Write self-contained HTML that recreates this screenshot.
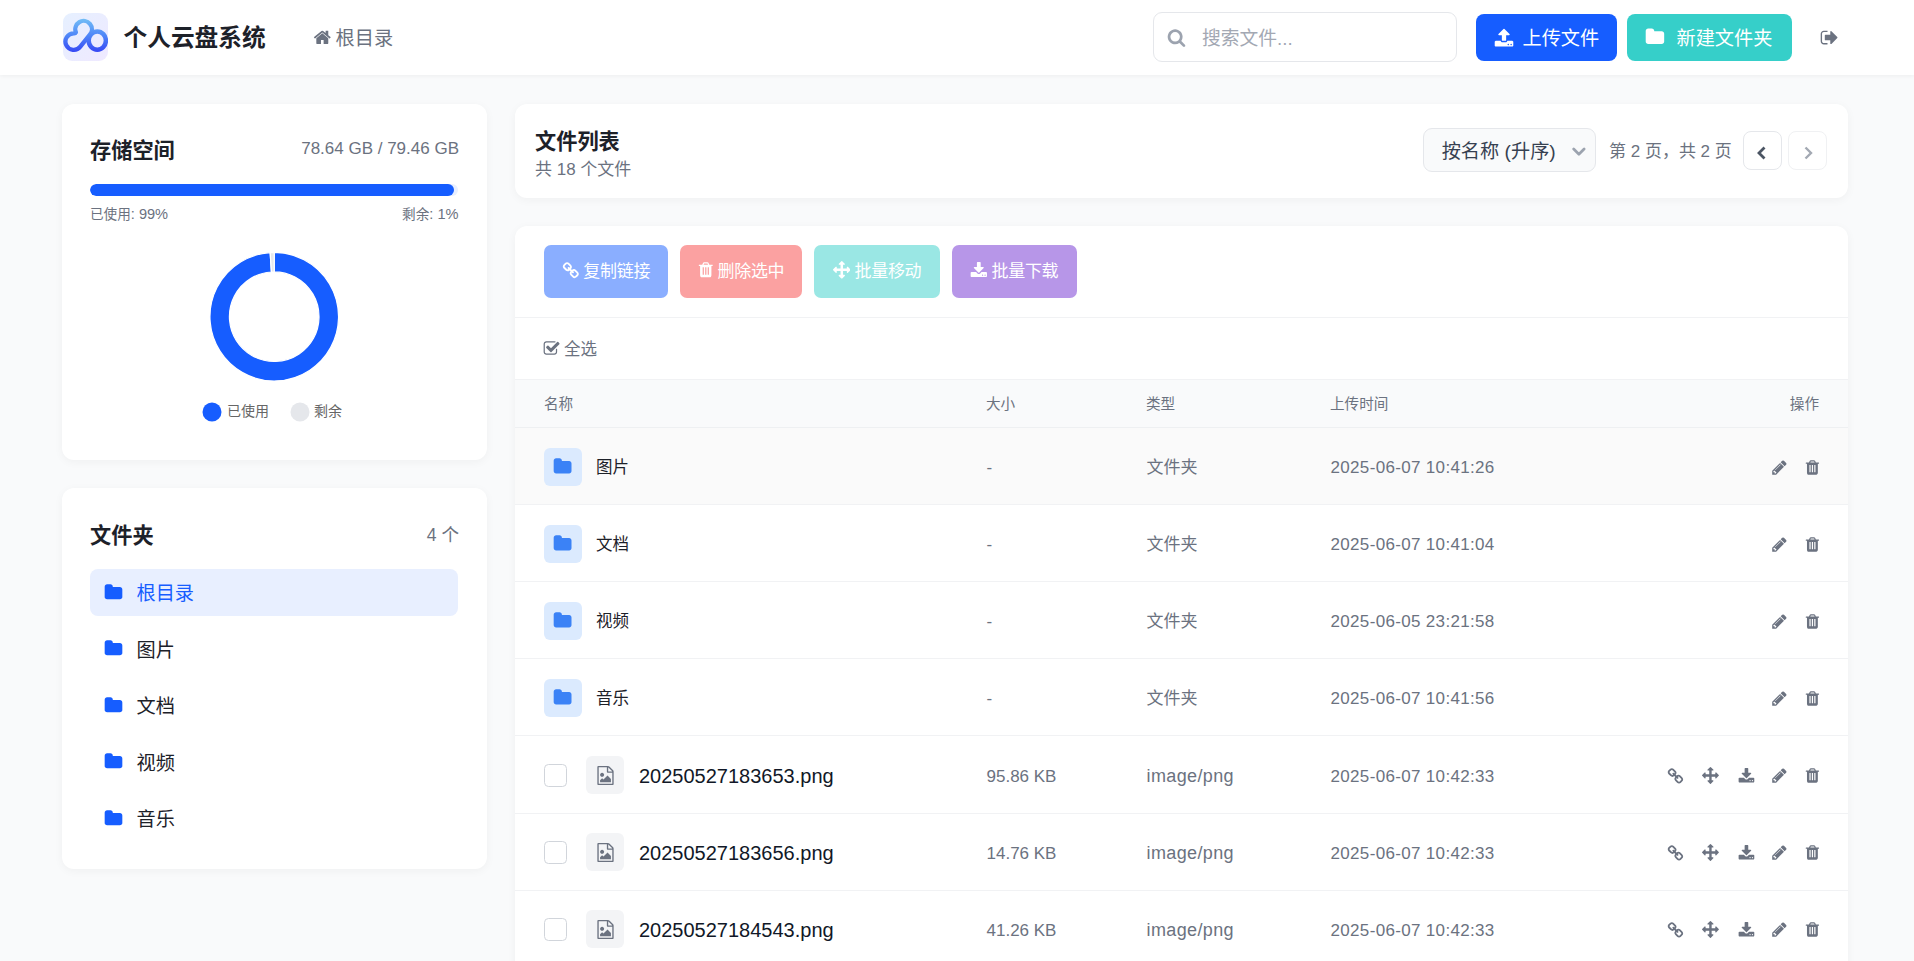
<!DOCTYPE html>
<html lang="zh-CN">
<head>
<meta charset="utf-8">
<title>个人云盘系统</title>
<style>
*{box-sizing:border-box;margin:0;padding:0}
html,body{width:1914px;height:961px;overflow:hidden}
body{font-family:"Liberation Sans","Noto Sans CJK SC",sans-serif;background:#f9fafb;color:#1d2129;position:relative}
svg{display:block}
span{white-space:nowrap}
#hdr{position:absolute;left:0;top:0;width:1914px;height:75px;background:#fff;box-shadow:0 1px 4px rgba(0,0,0,.05)}
#logo{position:absolute;left:62.600px;top:13px;width:45.800px;height:48.400px;border-radius:9px;background:linear-gradient(135deg,#e6f0ff,#efe9ff)}
#title{position:absolute;left:123.5px;top:20.3px;font-size:23.7px;line-height:36px;font-weight:700;color:#1d2129;white-space:nowrap}
#crumb{position:absolute;left:313px;top:22px;height:30px;color:#6b7280;font-size:19.2px;line-height:30px}
#crumb span{position:absolute;left:22.6px;top:2px}
#search{position:absolute;left:1153px;top:12px;width:304px;height:50px;border:1px solid #e5e7eb;border-radius:9px;background:#fff}
#search span{position:absolute;left:48px;top:10.8px;font-size:18.8px;line-height:30px;color:#a3a8b3}
.hbtn{position:absolute;top:14px;height:46.500px;border-radius:8px;color:#fff;font-size:19.2px;line-height:30px}
.hbtn span{position:absolute;top:9.7px}
#bup{left:1476px;width:141px;background:#165dff}
#bnew{left:1627px;width:165px;background:#36cfc9}
.card{position:absolute;background:#fff;border-radius:12px;box-shadow:0 2px 10px rgba(0,0,0,.045)}
#c1{left:62px;top:104px;width:425px;height:356px}
#c2{left:62px;top:488px;width:425px;height:381px}
#c3{left:515px;top:104px;width:1333px;height:93.5px}
#c4{left:515px;top:226px;width:1333px;height:760px;overflow:hidden}
.ct{position:absolute;font-weight:700;font-size:21.2px;line-height:30px;color:#1d2129;white-space:nowrap}
.rt{position:absolute;color:#6b7280;line-height:24px;white-space:nowrap}
.sub{color:#6b7280}
#track{position:absolute;left:28px;top:80px;width:368px;height:12px;border-radius:6px;background:#e8efff;overflow:hidden}
#fill{width:364.300px;height:12px;border-radius:6px;background:#165dff}
.sm i{font-style:normal;font-size:14.6px}
.sm{position:absolute;font-size:13.6px;line-height:20px;color:#6b7280;white-space:nowrap}
.lg{position:absolute;font-size:14px;line-height:20.6px;color:#666;white-space:nowrap}
.fi{position:absolute;left:28px;width:368px;height:47px;border-radius:8px;font-size:19.2px;line-height:47px;color:#1d2129}
.fi span{position:absolute;left:46.500px;top:1px}
.fi.act{background:#e8efff;color:#165dff}
#sel{position:absolute;left:907.500px;top:24px;width:173px;height:44px;border:1px solid #e5e7eb;border-radius:9px;background:#f9fafb;font-size:19.2px;line-height:42px;color:#374151}
#sel span{position:absolute;left:18.2px;top:2.3px}
.pg{position:absolute;top:27px;width:39.5px;height:38.500px;border:1px solid #e5e7eb;border-radius:8px;background:#fff;display:flex;align-items:center;justify-content:center}
.pg.dis{border-color:#f0f1f3}
.bb{position:absolute;top:19px;height:53px;border-radius:7px;color:#fff;font-size:17px;line-height:53px}
.bb span{position:absolute;left:38.500px;top:0;letter-spacing:-.3px}
.hl{position:absolute;left:0;width:1333px;height:1px;background:#f1f2f4}
#selall{font-size:16.500px;color:#6b7280}
#selall span{position:absolute;left:49px;top:111px;line-height:24px}
#th{position:absolute;left:0;top:153px;width:1333px;height:49px;background:#f9fafb;border-top:1px solid #f1f2f4;border-bottom:1px solid #eef0f2;font-size:14.6px;color:#6b7280}
#th span{position:absolute;top:0;line-height:48px}
.row{position:absolute;left:0;width:1333px;height:77.05px;border-bottom:1px solid #f1f2f4}
.row.hov{background:#fafafa}
.ib{position:absolute;top:19.500px;width:38px;height:38px;border-radius:6px}
.ib.d{background:#dbeafe}
.ib.f{background:#f3f4f6}
.cb{position:absolute;left:29px;top:27px;width:23px;height:23.500px;border:1px solid #d1d5db;border-radius:4.500px;background:#fff}
.nm{position:absolute;top:0;line-height:79px;color:#1d2129}
.dn{font-size:16.500px}
.fn{font-size:20px;color:#111827}
.c{position:absolute;top:0;line-height:79px;color:#6b7280;font-size:17px}
.sz{left:471.500px}
.tp{left:631.500px}
.dt{left:815.500px;letter-spacing:.33px}
.tpf{font-size:18px;letter-spacing:.38px}
</style>
</head>
<body>
<div id="hdr">
<div id="logo"><svg width="45.800" height="48.400" viewBox="0 0 45.800 48.400"><defs><linearGradient id="lg" gradientUnits="userSpaceOnUse" x1="0" y1="6" x2="0" y2="39"><stop offset="0" stop-color="#72bdf6"/><stop offset=".5" stop-color="#4f86f8"/><stop offset="1" stop-color="#3648f4"/></linearGradient></defs>
<path d="M12.900 19.300A8.300 8.300 0 1 1 26.900 21.600L17.300 33.700A8.300 8.300 0 1 1 10.900 20.300Q12.400 20.400 12.900 19.300Z" fill="none" stroke="url(#lg)" stroke-width="4.300" stroke-linejoin="round"/>
<ellipse cx="34.300" cy="27.600" rx="8.600" ry="9.100" fill="none" stroke="url(#lg)" stroke-width="4.500"/></svg></div>
<div id="title">个人云盘系统</div>
<div id="crumb"><svg width="18.6" height="18.6" viewBox="0 0 1792 1792" style="position:absolute;left:-0.2px;top:5.65px;"><path fill="#6b7280" d="M1472 992v480q0 26-19 45t-45 19h-384v-384h-256v384h-384q-26 0-45-19t-19-45v-480q0-1 .5-3t.5-3l575-474 575 474q1 2 1 6zm223-69l-62 74q-8 9-21 11h-3q-13 0-21-7l-692-577-692 577q-12 8-24 7-13-2-21-11l-62-74q-8-10-7-23.500t11-21.500l719-599q32-26 76-26t76 26l244 204v-195q0-14 9-23t23-9h192q14 0 23 9t9 23v408l219 182q10 8 11 21.500t-7 23.500z"/></svg><span>根目录</span></div>
<div id="search"><svg width="19" height="19" viewBox="0 0 1792 1792" style="position:absolute;left:12.9px;top:14.72px;"><path fill="#9ca3af" d="M1216 832q0-185-131.500-316.500t-316.500-131.500-316.500 131.500-131.500 316.500 131.500 316.500 316.500 131.500 316.500-131.500 131.500-316.500zm512 832q0 52-38 90t-90 38q-54 0-90-38l-343-342q-179 124-399 124-143 0-273.500-55.500t-225-150-150-225-55.500-273.500 55.500-273.500 150-225 225-150 273.500-55.500 273.500 55.500 225 150 150 225 55.500 273.500q0 220-124 399l343 343q37 37 37 90z"/></svg><span>搜索文件...</span></div>
<div class="hbtn" id="bup"><svg width="20" height="20" viewBox="0 0 1792 1792" style="position:absolute;left:18.2px;top:13.56px;"><path fill="#fff" d="M1344 1472q0-26-19-45t-45-19-45 19-19 45 19 45 45 19 45-19 19-45zm256 0q0-26-19-45t-45-19-45 19-19 45 19 45 45 19 45-19 19-45zm128-224v320q0 40-28 68t-68 28h-1472q-40 0-68-28t-28-68v-320q0-40 28-68t68-28h427q21 56 70.500 92t110.500 36h256q61 0 110.500-36t70.500-92h427q40 0 68 28t28 68zm-325-648q-17 40-59 40h-256v448q0 26-19 45t-45 19h-256q-26 0-45-19t-19-45v-448h-256q-42 0-59-40-17-39 14-69l448-448q18-19 45-19t45 19l448 448q31 30 14 69z"/></svg><span style="left:46.5px">上传文件</span></div>
<div class="hbtn" id="bnew"><svg width="19.9" height="19.9" viewBox="0 0 1792 1792" style="position:absolute;left:17.75px;top:13.26px;"><path fill="#fff" d="M1728 608v704q0 92-66 158t-158 66h-1216q-92 0-158-66t-66-158v-960q0-92 66-158t158-66h320q92 0 158 66t66 158v32h672q92 0 158 66t66 158z"/></svg><span style="left:49.5px">新建文件夹</span></div>
<svg width="19.2" height="19.2" viewBox="0 0 1792 1792" style="position:absolute;left:1819.56px;top:27.7px;"><path fill="#6b7280" d="M704 1440q0 4 1 20t.5 26.500-3 23.500-10 19.500-20.500 6.500h-320q-119 0-203.500-84.500t-84.500-203.500v-704q0-119 84.500-203.500t203.500-84.500h320q13 0 22.500 9.500t9.500 22.500q0 4 1 20t.5 26.500-3 23.500-10 19.500-20.500 6.500h-320q-66 0-113 47t-47 113v704q0 66 47 113t113 47h312l11.500 1 11.500 3 8 5.500 7 9 2 13.500zm928-544q0 26-19 45l-544 544q-19 19-45 19t-45-19-19-45v-288h-448q-26 0-45-19t-19-45v-384q0-26 19-45t45-19h448v-288q0-26 19-45t45-19 45 19l544 544q19 19 19 45z"/></svg>
</div>
<div class="card" id="c1">
<div class="ct" style="left:28px;top:32px">存储空间</div>
<div class="rt" style="right:28px;top:33px;font-size:17px">78.64 GB / 79.46 GB</div>
<div id="track"><div id="fill"></div></div>
<div class="sm" style="left:28px;top:100.2px">已使用<i>: 99%</i></div>
<div class="sm" style="right:28.5px;top:100.2px">剩余<i>: 1%</i></div>
<svg width="425" height="356" style="position:absolute;left:0;top:0"><path d="M212.20 148.40A64.3 64.3 0 1 1 208.16 148.53L209.39 167.99A44.8 44.8 0 1 0 212.20 167.90Z" fill="#165dff" stroke="#fff" stroke-width="1.2" stroke-linejoin="round"/><path d="M208.16 148.53A64.3 64.3 0 0 1 212.20 148.40L212.20 167.90A44.8 44.8 0 0 0 209.39 167.99Z" fill="#e5e7eb" stroke="#fff" stroke-width="1.2" stroke-linejoin="round"/><circle cx="150" cy="308" r="9.5" fill="#165dff"/><circle cx="238" cy="308" r="9.5" fill="#e5e7eb"/></svg>
<div class="lg" style="left:165px;top:297px">已使用</div><div class="lg" style="left:252px;top:297px">剩余</div>
</div>
<div class="card" id="c2">
<div class="ct" style="left:28px;top:33px">文件夹</div>
<div class="rt" style="right:28px;top:34.6px;font-size:17.6px">4 个</div>
<div class="fi act" style="top:81.0px"><svg width="19" height="19" viewBox="0 0 1792 1792" style="position:absolute;left:14.0px;top:13.68px;"><path fill="#165dff" d="M1728 608v704q0 92-66 158t-158 66h-1216q-92 0-158-66t-66-158v-960q0-92 66-158t158-66h320q92 0 158 66t66 158v32h672q92 0 158 66t66 158z"/></svg><span>根目录</span></div>
<div class="fi" style="top:137.5px"><svg width="19" height="19" viewBox="0 0 1792 1792" style="position:absolute;left:14.0px;top:13.68px;"><path fill="#165dff" d="M1728 608v704q0 92-66 158t-158 66h-1216q-92 0-158-66t-66-158v-960q0-92 66-158t158-66h320q92 0 158 66t66 158v32h672q92 0 158 66t66 158z"/></svg><span>图片</span></div>
<div class="fi" style="top:194.0px"><svg width="19" height="19" viewBox="0 0 1792 1792" style="position:absolute;left:14.0px;top:13.68px;"><path fill="#165dff" d="M1728 608v704q0 92-66 158t-158 66h-1216q-92 0-158-66t-66-158v-960q0-92 66-158t158-66h320q92 0 158 66t66 158v32h672q92 0 158 66t66 158z"/></svg><span>文档</span></div>
<div class="fi" style="top:250.5px"><svg width="19" height="19" viewBox="0 0 1792 1792" style="position:absolute;left:14.0px;top:13.68px;"><path fill="#165dff" d="M1728 608v704q0 92-66 158t-158 66h-1216q-92 0-158-66t-66-158v-960q0-92 66-158t158-66h320q92 0 158 66t66 158v32h672q92 0 158 66t66 158z"/></svg><span>视频</span></div>
<div class="fi" style="top:307.0px"><svg width="19" height="19" viewBox="0 0 1792 1792" style="position:absolute;left:14.0px;top:13.68px;"><path fill="#165dff" d="M1728 608v704q0 92-66 158t-158 66h-1216q-92 0-158-66t-66-158v-960q0-92 66-158t158-66h320q92 0 158 66t66 158v32h672q92 0 158 66t66 158z"/></svg><span>音乐</span></div>
</div>
<div class="card" id="c3">
<div class="ct" style="left:20px;top:23px">文件列表</div>
<div class="sub" style="position:absolute;left:20px;top:53.5px;font-size:17px;line-height:24px">共 18 个文件</div>
<div id="sel"><span>按名称 (升序)</span><svg width="14" height="10" viewBox="0 0 14 10" style="position:absolute;left:148.4px;top:17.6px"><path d="M1.7 2 6.9 7.2 12.1 2" fill="none" stroke="#9ca3af" stroke-width="2.7" stroke-linecap="round" stroke-linejoin="round"/></svg></div>
<div class="sub" style="position:absolute;left:1094px;top:36.3px;font-size:17px;line-height:24px;white-space:nowrap">第 2 页，共 2 页</div>
<div class="pg" style="left:1227.6px"><svg width="12" height="16" viewBox="0 0 12 16" style="position:relative;top:2.4px;left:-.8px"><path d="M8.5 2.5 3 8l5.500 5.500" fill="none" stroke="#4b5563" stroke-width="2.8" stroke-linejoin="miter"/></svg></div>
<div class="pg dis" style="left:1272.6px"><svg width="12" height="16" viewBox="0 0 12 16" style="position:relative;top:2.4px;left:.3px"><path d="M3.5 2.5 9 8l-5.500 5.500" fill="none" stroke="#a3a9b3" stroke-width="2.4" stroke-linejoin="miter"/></svg></div>
</div>
<div class="card" id="c4">
<div class="bb" style="left:29px;width:124px;background:#8aaeff"><svg width="17.6" height="17.6" viewBox="0 0 1792 1792" style="position:absolute;left:18.2px;top:16.83px;"><path fill="#fff" d="M1520 1216q0-40-28-68l-208-208q-28-28-68-28-42 0-72 32 3 3 19 18.500t21.500 21.500 15 19 13 25.500 3.500 27.500q0 40-28 68t-68 28q-15 0-27.500-3.500t-25.500-13-19-15-21.500-21.500-18.500-19q-33 31-33 73 0 40 28 68l206 207q27 27 68 27 40 0 68-26l147-146q28-28 28-67zm-703-705q0-40-28-68l-206-207q-28-28-68-28-39 0-68 27l-147 146q-28 28-28 67 0 40 28 68l208 208q27 27 68 27 42 0 72-31-3-3-19-18.500t-21.500-21.500-15-19-13-25.500-3.500-27.500q0-40 28-68t68-28q15 0 27.500 3.500t25.500 13 19 15 21.500 21.500 18.500 19q33-31 33-73zm895 705q0 120-85 203l-147 146q-83 83-203 83-121 0-204-85l-206-207q-83-83-83-203 0-123 88-209l-88-88q-86 88-208 88-120 0-204-84l-208-208q-84-84-84-204t85-203l147-146q83-83 203-83 121 0 204 85l206 207q83 83 83 203 0 123-88 209l88 88q86-88 208-88 120 0 204 84l208 208q84 84 84 204z"/></svg><span style="left:39.3px">复制链接</span></div>
<div class="bb" style="left:165px;width:122px;background:#fba1a1"><svg width="17.6" height="17.6" viewBox="0 0 1792 1792" style="position:absolute;left:16.74px;top:16.2px;"><path fill="#fff" fill-rule="evenodd" d="M224 384h307l70-167q15-37 54-63t79-26h320q40 0 79 26t54 63l70 167h307q14 0 23 9t9 23v64q0 14-9 23t-23 9h-96v948q0 83-47 143.500t-113 60.500h-832q-66 0-113-58.500t-47-141.500v-952h-96q-14 0-23-9t-9-23v-64q0-14 9-23t23-9zM672 384h448l-48-117q-7-9-17-11h-317q-10 2-17 11zM576 672q0-14 9-23t23-9h64q14 0 23 9t9 23v704q0 14-9 23t-23 9h-64q-14 0-23-9t-9-23zM832 672q0-14 9-23t23-9h64q14 0 23 9t9 23v704q0 14-9 23t-23 9h-64q-14 0-23-9t-9-23zM1088 672q0-14 9-23t23-9h64q14 0 23 9t9 23v704q0 14-9 23t-23 9h-64q-14 0-23-9t-9-23z"/></svg><span style="left:37.5px">删除选中</span></div>
<div class="bb" style="left:299px;width:126px;background:#9ae7e4"><svg width="17.6" height="17.6" viewBox="0 0 1792 1792" style="position:absolute;left:18.7px;top:16.2px;"><path fill="#fff" d="M1792 896q0 26-19 45l-256 256q-19 19-45 19t-45-19-19-45v-128h-384v384h128q26 0 45 19t19 45-19 45l-256 256q-19 19-45 19t-45-19l-256-256q-19-19-19-45t19-45 45-19h128v-384h-384v128q0 26-19 45t-45 19-45-19l-256-256q-19-19-19-45t19-45l256-256q19-19 45-19t45 19 19 45v128h384v-384h-128q-26 0-45-19t-19-45 19-45l256-256q19-19 45-19t45 19l256 256q19 19 19 45t-19 45-45 19h-128v384h384v-128q0-26 19-45t45-19 45 19l256 256q19 19 19 45z"/></svg><span style="left:40.5px">批量移动</span></div>
<div class="bb" style="left:437px;width:125px;background:#b796e8"><svg width="17.6" height="17.6" viewBox="0 0 1792 1792" style="position:absolute;left:17.7px;top:17.46px;"><path fill="#fff" d="M1344 1344q0-26-19-45t-45-19-45 19-19 45 19 45 45 19 45-19 19-45zm256 0q0-26-19-45t-45-19-45 19-19 45 19 45 45 19 45-19 19-45zm128-224v320q0 40-28 68t-68 28h-1472q-40 0-68-28t-28-68v-320q0-40 28-68t68-28h465l135 136q58 56 136 56t136-56l136-136h464q40 0 68 28t28 68zm-325-569q17 41-14 70l-448 448q-18 19-45 19t-45-19l-448-448q-31-29-14-70 17-39 59-39h256v-448q0-26 19-45t45-19h256q26 0 45 19t19 45v448h256q42 0 59 39z"/></svg><span style="left:39.5px">批量下载</span></div>
<div class="hl" style="top:91px"></div>
<div id="selall"><svg width="17.2" height="17.2" viewBox="0 0 1792 1792" style="position:absolute;left:28.25px;top:114.11px;"><path fill="#6b7280" d="M1472 930v318q0 119-84.500 203.500t-203.500 84.500h-832q-119 0-203.500-84.500t-84.500-203.500v-832q0-119 84.500-203.500t203.500-84.500h832q63 0 117 25 15 7 18 23 3 17-9 29l-49 49q-10 10-23 10-3 0-9-2-23-6-45-6h-832q-66 0-113 47t-47 113v832q0 66 47 113t113 47h832q66 0 113-47t47-113v-254q0-13 9-22l64-64q10-10 23-10 6 0 12 3 20 8 20 29zm231-489l-814 814q-24 24-57 24t-57-24l-430-430q-24-24-24-57t24-57l110-110q24-24 57-24t57 24l263 263 647-647q24-24 57-24t57 24l110 110q24 24 24 57t-24 57z"/></svg><span>全选</span></div>
<div id="th"><span style="left:29px">名称</span><span style="left:471px">大小</span><span style="left:631px">类型</span><span style="left:815px">上传时间</span><span style="right:29px">操作</span></div>
<div class="row hov" style="top:202.30px"><div class="ib d" style="left:29px"><svg width="19.2" height="19.2" viewBox="0 0 1792 1792" style="position:absolute;left:9.4px;top:8.89px;"><path fill="#3b82f6" d="M1728 608v704q0 92-66 158t-158 66h-1216q-92 0-158-66t-66-158v-960q0-92 66-158t158-66h320q92 0 158 66t66 158v32h672q92 0 158 66t66 158z"/></svg></div><span class="nm dn" style="left:81px">图片</span><span class="c sz">-</span><span class="c tp tpd">文件夹</span><span class="c dt">2025-06-07 10:41:26</span><svg width="16.9" height="16.9" viewBox="0 0 1792 1792" style="position:absolute;left:1289.29px;top:30.55px;"><path fill="#6b7280" fill-rule="evenodd" d="M224 384h307l70-167q15-37 54-63t79-26h320q40 0 79 26t54 63l70 167h307q14 0 23 9t9 23v64q0 14-9 23t-23 9h-96v948q0 83-47 143.500t-113 60.500h-832q-66 0-113-58.500t-47-141.500v-952h-96q-14 0-23-9t-9-23v-64q0-14 9-23t23-9zM672 384h448l-48-117q-7-9-17-11h-317q-10 2-17 11zM576 672q0-14 9-23t23-9h64q14 0 23 9t9 23v704q0 14-9 23t-23 9h-64q-14 0-23-9t-9-23zM832 672q0-14 9-23t23-9h64q14 0 23 9t9 23v704q0 14-9 23t-23 9h-64q-14 0-23-9t-9-23zM1088 672q0-14 9-23t23-9h64q14 0 23 9t9 23v704q0 14-9 23t-23 9h-64q-14 0-23-9t-9-23z"/></svg><svg width="16.9" height="16.9" viewBox="0 0 1792 1792" style="position:absolute;left:1256.36px;top:30.44px;"><path fill="#6b7280" d="M491 1536l91-91-235-235-91 91v107h128v128h107zm523-928q0-22-22-22-10 0-17 7l-542 542q-7 7-7 17 0 22 22 22 10 0 17-7l542-542q7-7 7-17zm-54-192l416 416-832 832h-416v-416zm683 96q0 53-37 90l-166 166-416-416 166-165q36-38 90-38 53 0 91 38l235 234q37 39 37 91z"/></svg></div>
<div class="row" style="top:279.35px"><div class="ib d" style="left:29px"><svg width="19.2" height="19.2" viewBox="0 0 1792 1792" style="position:absolute;left:9.4px;top:8.89px;"><path fill="#3b82f6" d="M1728 608v704q0 92-66 158t-158 66h-1216q-92 0-158-66t-66-158v-960q0-92 66-158t158-66h320q92 0 158 66t66 158v32h672q92 0 158 66t66 158z"/></svg></div><span class="nm dn" style="left:81px">文档</span><span class="c sz">-</span><span class="c tp tpd">文件夹</span><span class="c dt">2025-06-07 10:41:04</span><svg width="16.9" height="16.9" viewBox="0 0 1792 1792" style="position:absolute;left:1289.29px;top:30.55px;"><path fill="#6b7280" fill-rule="evenodd" d="M224 384h307l70-167q15-37 54-63t79-26h320q40 0 79 26t54 63l70 167h307q14 0 23 9t9 23v64q0 14-9 23t-23 9h-96v948q0 83-47 143.500t-113 60.500h-832q-66 0-113-58.500t-47-141.500v-952h-96q-14 0-23-9t-9-23v-64q0-14 9-23t23-9zM672 384h448l-48-117q-7-9-17-11h-317q-10 2-17 11zM576 672q0-14 9-23t23-9h64q14 0 23 9t9 23v704q0 14-9 23t-23 9h-64q-14 0-23-9t-9-23zM832 672q0-14 9-23t23-9h64q14 0 23 9t9 23v704q0 14-9 23t-23 9h-64q-14 0-23-9t-9-23zM1088 672q0-14 9-23t23-9h64q14 0 23 9t9 23v704q0 14-9 23t-23 9h-64q-14 0-23-9t-9-23z"/></svg><svg width="16.9" height="16.9" viewBox="0 0 1792 1792" style="position:absolute;left:1256.36px;top:30.44px;"><path fill="#6b7280" d="M491 1536l91-91-235-235-91 91v107h128v128h107zm523-928q0-22-22-22-10 0-17 7l-542 542q-7 7-7 17 0 22 22 22 10 0 17-7l542-542q7-7 7-17zm-54-192l416 416-832 832h-416v-416zm683 96q0 53-37 90l-166 166-416-416 166-165q36-38 90-38 53 0 91 38l235 234q37 39 37 91z"/></svg></div>
<div class="row" style="top:356.40px"><div class="ib d" style="left:29px"><svg width="19.2" height="19.2" viewBox="0 0 1792 1792" style="position:absolute;left:9.4px;top:8.89px;"><path fill="#3b82f6" d="M1728 608v704q0 92-66 158t-158 66h-1216q-92 0-158-66t-66-158v-960q0-92 66-158t158-66h320q92 0 158 66t66 158v32h672q92 0 158 66t66 158z"/></svg></div><span class="nm dn" style="left:81px">视频</span><span class="c sz">-</span><span class="c tp tpd">文件夹</span><span class="c dt">2025-06-05 23:21:58</span><svg width="16.9" height="16.9" viewBox="0 0 1792 1792" style="position:absolute;left:1289.29px;top:30.55px;"><path fill="#6b7280" fill-rule="evenodd" d="M224 384h307l70-167q15-37 54-63t79-26h320q40 0 79 26t54 63l70 167h307q14 0 23 9t9 23v64q0 14-9 23t-23 9h-96v948q0 83-47 143.500t-113 60.500h-832q-66 0-113-58.500t-47-141.500v-952h-96q-14 0-23-9t-9-23v-64q0-14 9-23t23-9zM672 384h448l-48-117q-7-9-17-11h-317q-10 2-17 11zM576 672q0-14 9-23t23-9h64q14 0 23 9t9 23v704q0 14-9 23t-23 9h-64q-14 0-23-9t-9-23zM832 672q0-14 9-23t23-9h64q14 0 23 9t9 23v704q0 14-9 23t-23 9h-64q-14 0-23-9t-9-23zM1088 672q0-14 9-23t23-9h64q14 0 23 9t9 23v704q0 14-9 23t-23 9h-64q-14 0-23-9t-9-23z"/></svg><svg width="16.9" height="16.9" viewBox="0 0 1792 1792" style="position:absolute;left:1256.36px;top:30.44px;"><path fill="#6b7280" d="M491 1536l91-91-235-235-91 91v107h128v128h107zm523-928q0-22-22-22-10 0-17 7l-542 542q-7 7-7 17 0 22 22 22 10 0 17-7l542-542q7-7 7-17zm-54-192l416 416-832 832h-416v-416zm683 96q0 53-37 90l-166 166-416-416 166-165q36-38 90-38 53 0 91 38l235 234q37 39 37 91z"/></svg></div>
<div class="row" style="top:433.45px"><div class="ib d" style="left:29px"><svg width="19.2" height="19.2" viewBox="0 0 1792 1792" style="position:absolute;left:9.4px;top:8.89px;"><path fill="#3b82f6" d="M1728 608v704q0 92-66 158t-158 66h-1216q-92 0-158-66t-66-158v-960q0-92 66-158t158-66h320q92 0 158 66t66 158v32h672q92 0 158 66t66 158z"/></svg></div><span class="nm dn" style="left:81px">音乐</span><span class="c sz">-</span><span class="c tp tpd">文件夹</span><span class="c dt">2025-06-07 10:41:56</span><svg width="16.9" height="16.9" viewBox="0 0 1792 1792" style="position:absolute;left:1289.29px;top:30.55px;"><path fill="#6b7280" fill-rule="evenodd" d="M224 384h307l70-167q15-37 54-63t79-26h320q40 0 79 26t54 63l70 167h307q14 0 23 9t9 23v64q0 14-9 23t-23 9h-96v948q0 83-47 143.500t-113 60.500h-832q-66 0-113-58.500t-47-141.500v-952h-96q-14 0-23-9t-9-23v-64q0-14 9-23t23-9zM672 384h448l-48-117q-7-9-17-11h-317q-10 2-17 11zM576 672q0-14 9-23t23-9h64q14 0 23 9t9 23v704q0 14-9 23t-23 9h-64q-14 0-23-9t-9-23zM832 672q0-14 9-23t23-9h64q14 0 23 9t9 23v704q0 14-9 23t-23 9h-64q-14 0-23-9t-9-23zM1088 672q0-14 9-23t23-9h64q14 0 23 9t9 23v704q0 14-9 23t-23 9h-64q-14 0-23-9t-9-23z"/></svg><svg width="16.9" height="16.9" viewBox="0 0 1792 1792" style="position:absolute;left:1256.36px;top:30.44px;"><path fill="#6b7280" d="M491 1536l91-91-235-235-91 91v107h128v128h107zm523-928q0-22-22-22-10 0-17 7l-542 542q-7 7-7 17 0 22 22 22 10 0 17-7l542-542q7-7 7-17zm-54-192l416 416-832 832h-416v-416zm683 96q0 53-37 90l-166 166-416-416 166-165q36-38 90-38 53 0 91 38l235 234q37 39 37 91z"/></svg></div>
<div class="row" style="top:510.50px"><div class="cb"></div><div class="ib f" style="left:71px"><svg width="19" height="19" viewBox="0 0 1792 1792" style="position:absolute;left:10.0px;top:9.9px;"><path fill="#6b7280" d="M1596 380q28 28 48 76t20 88v1152q0 40-28 68t-68 28h-1344q-40 0-68-28t-28-68v-1600q0-40 28-68t68-28h896q40 0 88 20t76 48zm-444-244v376h376q-10-29-22-41l-313-313q-12-12-41-22zm384 1528v-1024h-416q-40 0-68-28t-28-68v-416h-768v1536h1280zm-128-448v320h-1024v-192l192-192 128 128 384-384zm-832-192q-80 0-136-56t-56-136 56-136 136-56 136 56 56 136-56 136-136 56z"/></svg></div><span class="nm fn" style="left:124px">20250527183653.png</span><span class="c sz">95.86 KB</span><span class="c tp tpf">image/png</span><span class="c dt">2025-06-07 10:42:33</span><svg width="16.9" height="16.9" viewBox="0 0 1792 1792" style="position:absolute;left:1289.29px;top:30.55px;"><path fill="#6b7280" fill-rule="evenodd" d="M224 384h307l70-167q15-37 54-63t79-26h320q40 0 79 26t54 63l70 167h307q14 0 23 9t9 23v64q0 14-9 23t-23 9h-96v948q0 83-47 143.500t-113 60.500h-832q-66 0-113-58.500t-47-141.500v-952h-96q-14 0-23-9t-9-23v-64q0-14 9-23t23-9zM672 384h448l-48-117q-7-9-17-11h-317q-10 2-17 11zM576 672q0-14 9-23t23-9h64q14 0 23 9t9 23v704q0 14-9 23t-23 9h-64q-14 0-23-9t-9-23zM832 672q0-14 9-23t23-9h64q14 0 23 9t9 23v704q0 14-9 23t-23 9h-64q-14 0-23-9t-9-23zM1088 672q0-14 9-23t23-9h64q14 0 23 9t9 23v704q0 14-9 23t-23 9h-64q-14 0-23-9t-9-23z"/></svg><svg width="16.9" height="16.9" viewBox="0 0 1792 1792" style="position:absolute;left:1256.36px;top:30.44px;"><path fill="#6b7280" d="M491 1536l91-91-235-235-91 91v107h128v128h107zm523-928q0-22-22-22-10 0-17 7l-542 542q-7 7-7 17 0 22 22 22 10 0 17-7l542-542q7-7 7-17zm-54-192l416 416-832 832h-416v-416zm683 96q0 53-37 90l-166 166-416-416 166-165q36-38 90-38 53 0 91 38l235 234q37 39 37 91z"/></svg><svg width="16.9" height="16.9" viewBox="0 0 1792 1792" style="position:absolute;left:1222.75px;top:31.76px;"><path fill="#6b7280" d="M1344 1344q0-26-19-45t-45-19-45 19-19 45 19 45 45 19 45-19 19-45zm256 0q0-26-19-45t-45-19-45 19-19 45 19 45 45 19 45-19 19-45zm128-224v320q0 40-28 68t-68 28h-1472q-40 0-68-28t-28-68v-320q0-40 28-68t68-28h465l135 136q58 56 136 56t136-56l136-136h464q40 0 68 28t28 68zm-325-569q17 41-14 70l-448 448q-18 19-45 19t-45-19l-448-448q-31-29-14-70 17-39 59-39h256v-448q0-26 19-45t45-19h256q26 0 45 19t19 45v448h256q42 0 59 39z"/></svg><svg width="16.9" height="16.9" viewBox="0 0 1792 1792" style="position:absolute;left:1187.25px;top:30.55px;"><path fill="#6b7280" d="M1792 896q0 26-19 45l-256 256q-19 19-45 19t-45-19-19-45v-128h-384v384h128q26 0 45 19t19 45-19 45l-256 256q-19 19-45 19t-45-19l-256-256q-19-19-19-45t19-45 45-19h128v-384h-384v128q0 26-19 45t-45 19-45-19l-256-256q-19-19-19-45t19-45l256-256q19-19 45-19t45 19 19 45v128h384v-384h-128q-26 0-45-19t-19-45 19-45l256-256q19-19 45-19t45 19l256 256q19 19 19 45t-19 45-45 19h-128v384h384v-128q0-26 19-45t45-19 45 19l256 256q19 19 19 45z"/></svg><svg width="16.9" height="16.9" viewBox="0 0 1792 1792" style="position:absolute;left:1152.05px;top:31.15px;"><path fill="#6b7280" d="M1520 1216q0-40-28-68l-208-208q-28-28-68-28-42 0-72 32 3 3 19 18.500t21.500 21.500 15 19 13 25.500 3.500 27.500q0 40-28 68t-68 28q-15 0-27.500-3.500t-25.500-13-19-15-21.500-21.500-18.500-19q-33 31-33 73 0 40 28 68l206 207q27 27 68 27 40 0 68-26l147-146q28-28 28-67zm-703-705q0-40-28-68l-206-207q-28-28-68-28-39 0-68 27l-147 146q-28 28-28 67 0 40 28 68l208 208q27 27 68 27 42 0 72-31-3-3-19-18.500t-21.500-21.500-15-19-13-25.500-3.500-27.500q0-40 28-68t68-28q15 0 27.500 3.500t25.500 13 19 15 21.500 21.500 18.500 19q33-31 33-73zm895 705q0 120-85 203l-147 146q-83 83-203 83-121 0-204-85l-206-207q-83-83-83-203 0-123 88-209l-88-88q-86 88-208 88-120 0-204-84l-208-208q-84-84-84-204t85-203l147-146q83-83 203-83 121 0 204 85l206 207q83 83 83 203 0 123-88 209l88 88q86-88 208-88 120 0 204 84l208 208q84 84 84 204z"/></svg></div>
<div class="row" style="top:587.55px"><div class="cb"></div><div class="ib f" style="left:71px"><svg width="19" height="19" viewBox="0 0 1792 1792" style="position:absolute;left:10.0px;top:9.9px;"><path fill="#6b7280" d="M1596 380q28 28 48 76t20 88v1152q0 40-28 68t-68 28h-1344q-40 0-68-28t-28-68v-1600q0-40 28-68t68-28h896q40 0 88 20t76 48zm-444-244v376h376q-10-29-22-41l-313-313q-12-12-41-22zm384 1528v-1024h-416q-40 0-68-28t-28-68v-416h-768v1536h1280zm-128-448v320h-1024v-192l192-192 128 128 384-384zm-832-192q-80 0-136-56t-56-136 56-136 136-56 136 56 56 136-56 136-136 56z"/></svg></div><span class="nm fn" style="left:124px">20250527183656.png</span><span class="c sz">14.76 KB</span><span class="c tp tpf">image/png</span><span class="c dt">2025-06-07 10:42:33</span><svg width="16.9" height="16.9" viewBox="0 0 1792 1792" style="position:absolute;left:1289.29px;top:30.55px;"><path fill="#6b7280" fill-rule="evenodd" d="M224 384h307l70-167q15-37 54-63t79-26h320q40 0 79 26t54 63l70 167h307q14 0 23 9t9 23v64q0 14-9 23t-23 9h-96v948q0 83-47 143.500t-113 60.500h-832q-66 0-113-58.500t-47-141.500v-952h-96q-14 0-23-9t-9-23v-64q0-14 9-23t23-9zM672 384h448l-48-117q-7-9-17-11h-317q-10 2-17 11zM576 672q0-14 9-23t23-9h64q14 0 23 9t9 23v704q0 14-9 23t-23 9h-64q-14 0-23-9t-9-23zM832 672q0-14 9-23t23-9h64q14 0 23 9t9 23v704q0 14-9 23t-23 9h-64q-14 0-23-9t-9-23zM1088 672q0-14 9-23t23-9h64q14 0 23 9t9 23v704q0 14-9 23t-23 9h-64q-14 0-23-9t-9-23z"/></svg><svg width="16.9" height="16.9" viewBox="0 0 1792 1792" style="position:absolute;left:1256.36px;top:30.44px;"><path fill="#6b7280" d="M491 1536l91-91-235-235-91 91v107h128v128h107zm523-928q0-22-22-22-10 0-17 7l-542 542q-7 7-7 17 0 22 22 22 10 0 17-7l542-542q7-7 7-17zm-54-192l416 416-832 832h-416v-416zm683 96q0 53-37 90l-166 166-416-416 166-165q36-38 90-38 53 0 91 38l235 234q37 39 37 91z"/></svg><svg width="16.9" height="16.9" viewBox="0 0 1792 1792" style="position:absolute;left:1222.75px;top:31.76px;"><path fill="#6b7280" d="M1344 1344q0-26-19-45t-45-19-45 19-19 45 19 45 45 19 45-19 19-45zm256 0q0-26-19-45t-45-19-45 19-19 45 19 45 45 19 45-19 19-45zm128-224v320q0 40-28 68t-68 28h-1472q-40 0-68-28t-28-68v-320q0-40 28-68t68-28h465l135 136q58 56 136 56t136-56l136-136h464q40 0 68 28t28 68zm-325-569q17 41-14 70l-448 448q-18 19-45 19t-45-19l-448-448q-31-29-14-70 17-39 59-39h256v-448q0-26 19-45t45-19h256q26 0 45 19t19 45v448h256q42 0 59 39z"/></svg><svg width="16.9" height="16.9" viewBox="0 0 1792 1792" style="position:absolute;left:1187.25px;top:30.55px;"><path fill="#6b7280" d="M1792 896q0 26-19 45l-256 256q-19 19-45 19t-45-19-19-45v-128h-384v384h128q26 0 45 19t19 45-19 45l-256 256q-19 19-45 19t-45-19l-256-256q-19-19-19-45t19-45 45-19h128v-384h-384v128q0 26-19 45t-45 19-45-19l-256-256q-19-19-19-45t19-45l256-256q19-19 45-19t45 19 19 45v128h384v-384h-128q-26 0-45-19t-19-45 19-45l256-256q19-19 45-19t45 19l256 256q19 19 19 45t-19 45-45 19h-128v384h384v-128q0-26 19-45t45-19 45 19l256 256q19 19 19 45z"/></svg><svg width="16.9" height="16.9" viewBox="0 0 1792 1792" style="position:absolute;left:1152.05px;top:31.15px;"><path fill="#6b7280" d="M1520 1216q0-40-28-68l-208-208q-28-28-68-28-42 0-72 32 3 3 19 18.500t21.500 21.500 15 19 13 25.500 3.500 27.500q0 40-28 68t-68 28q-15 0-27.500-3.500t-25.500-13-19-15-21.500-21.500-18.500-19q-33 31-33 73 0 40 28 68l206 207q27 27 68 27 40 0 68-26l147-146q28-28 28-67zm-703-705q0-40-28-68l-206-207q-28-28-68-28-39 0-68 27l-147 146q-28 28-28 67 0 40 28 68l208 208q27 27 68 27 42 0 72-31-3-3-19-18.500t-21.500-21.500-15-19-13-25.500-3.500-27.500q0-40 28-68t68-28q15 0 27.500 3.500t25.500 13 19 15 21.500 21.500 18.500 19q33-31 33-73zm895 705q0 120-85 203l-147 146q-83 83-203 83-121 0-204-85l-206-207q-83-83-83-203 0-123 88-209l-88-88q-86 88-208 88-120 0-204-84l-208-208q-84-84-84-204t85-203l147-146q83-83 203-83 121 0 204 85l206 207q83 83 83 203 0 123-88 209l88 88q86-88 208-88 120 0 204 84l208 208q84 84 84 204z"/></svg></div>
<div class="row" style="top:664.60px"><div class="cb"></div><div class="ib f" style="left:71px"><svg width="19" height="19" viewBox="0 0 1792 1792" style="position:absolute;left:10.0px;top:9.9px;"><path fill="#6b7280" d="M1596 380q28 28 48 76t20 88v1152q0 40-28 68t-68 28h-1344q-40 0-68-28t-28-68v-1600q0-40 28-68t68-28h896q40 0 88 20t76 48zm-444-244v376h376q-10-29-22-41l-313-313q-12-12-41-22zm384 1528v-1024h-416q-40 0-68-28t-28-68v-416h-768v1536h1280zm-128-448v320h-1024v-192l192-192 128 128 384-384zm-832-192q-80 0-136-56t-56-136 56-136 136-56 136 56 56 136-56 136-136 56z"/></svg></div><span class="nm fn" style="left:124px">20250527184543.png</span><span class="c sz">41.26 KB</span><span class="c tp tpf">image/png</span><span class="c dt">2025-06-07 10:42:33</span><svg width="16.9" height="16.9" viewBox="0 0 1792 1792" style="position:absolute;left:1289.29px;top:30.55px;"><path fill="#6b7280" fill-rule="evenodd" d="M224 384h307l70-167q15-37 54-63t79-26h320q40 0 79 26t54 63l70 167h307q14 0 23 9t9 23v64q0 14-9 23t-23 9h-96v948q0 83-47 143.500t-113 60.500h-832q-66 0-113-58.500t-47-141.500v-952h-96q-14 0-23-9t-9-23v-64q0-14 9-23t23-9zM672 384h448l-48-117q-7-9-17-11h-317q-10 2-17 11zM576 672q0-14 9-23t23-9h64q14 0 23 9t9 23v704q0 14-9 23t-23 9h-64q-14 0-23-9t-9-23zM832 672q0-14 9-23t23-9h64q14 0 23 9t9 23v704q0 14-9 23t-23 9h-64q-14 0-23-9t-9-23zM1088 672q0-14 9-23t23-9h64q14 0 23 9t9 23v704q0 14-9 23t-23 9h-64q-14 0-23-9t-9-23z"/></svg><svg width="16.9" height="16.9" viewBox="0 0 1792 1792" style="position:absolute;left:1256.36px;top:30.44px;"><path fill="#6b7280" d="M491 1536l91-91-235-235-91 91v107h128v128h107zm523-928q0-22-22-22-10 0-17 7l-542 542q-7 7-7 17 0 22 22 22 10 0 17-7l542-542q7-7 7-17zm-54-192l416 416-832 832h-416v-416zm683 96q0 53-37 90l-166 166-416-416 166-165q36-38 90-38 53 0 91 38l235 234q37 39 37 91z"/></svg><svg width="16.9" height="16.9" viewBox="0 0 1792 1792" style="position:absolute;left:1222.75px;top:31.76px;"><path fill="#6b7280" d="M1344 1344q0-26-19-45t-45-19-45 19-19 45 19 45 45 19 45-19 19-45zm256 0q0-26-19-45t-45-19-45 19-19 45 19 45 45 19 45-19 19-45zm128-224v320q0 40-28 68t-68 28h-1472q-40 0-68-28t-28-68v-320q0-40 28-68t68-28h465l135 136q58 56 136 56t136-56l136-136h464q40 0 68 28t28 68zm-325-569q17 41-14 70l-448 448q-18 19-45 19t-45-19l-448-448q-31-29-14-70 17-39 59-39h256v-448q0-26 19-45t45-19h256q26 0 45 19t19 45v448h256q42 0 59 39z"/></svg><svg width="16.9" height="16.9" viewBox="0 0 1792 1792" style="position:absolute;left:1187.25px;top:30.55px;"><path fill="#6b7280" d="M1792 896q0 26-19 45l-256 256q-19 19-45 19t-45-19-19-45v-128h-384v384h128q26 0 45 19t19 45-19 45l-256 256q-19 19-45 19t-45-19l-256-256q-19-19-19-45t19-45 45-19h128v-384h-384v128q0 26-19 45t-45 19-45-19l-256-256q-19-19-19-45t19-45l256-256q19-19 45-19t45 19 19 45v128h384v-384h-128q-26 0-45-19t-19-45 19-45l256-256q19-19 45-19t45 19l256 256q19 19 19 45t-19 45-45 19h-128v384h384v-128q0-26 19-45t45-19 45 19l256 256q19 19 19 45z"/></svg><svg width="16.9" height="16.9" viewBox="0 0 1792 1792" style="position:absolute;left:1152.05px;top:31.15px;"><path fill="#6b7280" d="M1520 1216q0-40-28-68l-208-208q-28-28-68-28-42 0-72 32 3 3 19 18.500t21.500 21.500 15 19 13 25.500 3.500 27.500q0 40-28 68t-68 28q-15 0-27.500-3.500t-25.500-13-19-15-21.500-21.500-18.500-19q-33 31-33 73 0 40 28 68l206 207q27 27 68 27 40 0 68-26l147-146q28-28 28-67zm-703-705q0-40-28-68l-206-207q-28-28-68-28-39 0-68 27l-147 146q-28 28-28 67 0 40 28 68l208 208q27 27 68 27 42 0 72-31-3-3-19-18.500t-21.500-21.500-15-19-13-25.500-3.500-27.500q0-40 28-68t68-28q15 0 27.500 3.500t25.500 13 19 15 21.500 21.500 18.500 19q33-31 33-73zm895 705q0 120-85 203l-147 146q-83 83-203 83-121 0-204-85l-206-207q-83-83-83-203 0-123 88-209l-88-88q-86 88-208 88-120 0-204-84l-208-208q-84-84-84-204t85-203l147-146q83-83 203-83 121 0 204 85l206 207q83 83 83 203 0 123-88 209l88 88q86-88 208-88 120 0 204 84l208 208q84 84 84 204z"/></svg></div>
</div>
</body>
</html>
